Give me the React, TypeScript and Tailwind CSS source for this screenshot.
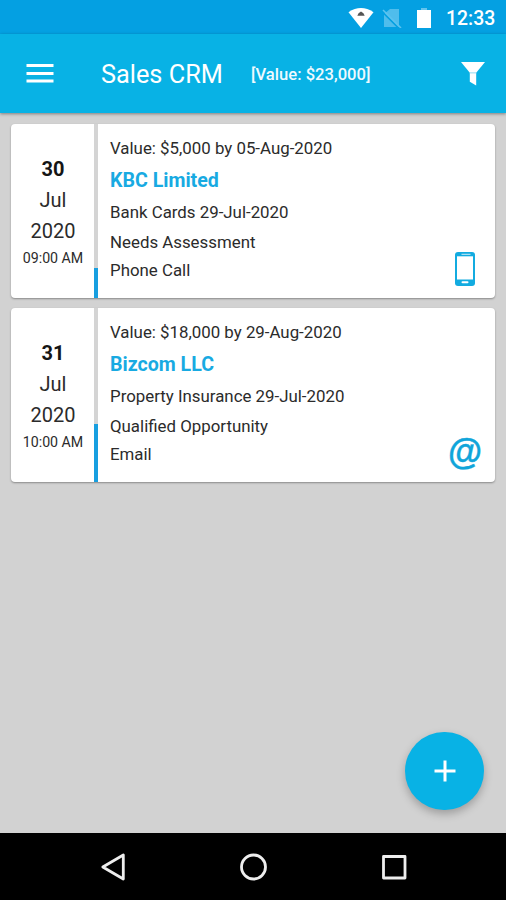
import React from "react";

type Deal = {
  day: string;
  month: string;
  year: string;
  time: string;
  value: string;
  name: string;
  product: string;
  stage: string;
  action: string;
  kind: "phone" | "email";
  bar: number;
};

const deals: Deal[] = [
  {
    day: "30", month: "Jul", year: "2020", time: "09:00 AM",
    value: "Value: $5,000 by 05-Aug-2020", name: "KBC Limited",
    product: "Bank Cards 29-Jul-2020", stage: "Needs Assessment",
    action: "Phone Call", kind: "phone", bar: 29.5,
  },
  {
    day: "31", month: "Jul", year: "2020", time: "10:00 AM",
    value: "Value: $18,000 by 29-Aug-2020", name: "Bizcom LLC",
    product: "Property Insurance 29-Jul-2020", stage: "Qualified Opportunity",
    action: "Email", kind: "email", bar: 58,
  },
];

function StatusBar() {
  return (
    <div className="flex h-[34px] shrink-0 items-center justify-end bg-[#04a0e2] pr-[10px] text-white">
      <svg className="mr-[8px] mt-px" width="26" height="22" viewBox="0 0 26 22">
        <path d="M.5 5.2Q13-3 25.5 5.2L13 21z" fill="#fff" />
        <path d="M9.3 8.8Q10 6.2 13 4.6Q16 6.2 16.7 8.8z" fill="#555" />
      </svg>
      <svg className="mr-[14px] mt-px" width="20" height="20" viewBox="0 0 20 20">
        <path d="M8 1h9v18H2V6z" fill="#4fbdec" />
        <path d="M0 3.5L16.5 20" stroke="#04a0e2" strokeWidth="1.6" />
        <path d="M1 2L19 20" stroke="#5bc3ef" strokeWidth="1.6" />
      </svg>
      <svg className="mr-[14px] mt-[2px]" width="16" height="22" viewBox="0 0 16 22">
        <path d="M1 3h14v18H1z" fill="#fff" />
        <path d="M5 1h6v2H5z" fill="#65c4ed" />
      </svg>
      <span className="mt-[3px] w-[50px] whitespace-nowrap text-[19.4px] font-medium leading-6">12:33</span>
    </div>
  );
}

function AppBar() {
  return (
    <header className="z-10 flex h-[79px] shrink-0 items-center bg-[#08b2e5] pl-[26px] pr-[21px] text-white shadow-[0_1px_3px_rgba(0,0,0,0.4)]">
      <svg width="28" height="22" viewBox="0 0 28 22">
        <path d="M.5 2.5h27M.5 10.5h27M.5 18h27" stroke="#fff" strokeWidth="3.2" />
      </svg>
      <h1 className="ml-[47px] mt-[3px] w-[150px] whitespace-nowrap text-[25.3px] leading-8">Sales CRM</h1>
      <span className="mt-[2px] whitespace-nowrap text-[16.6px] font-medium leading-6 text-[#effaff]">[Value: $23,000]</span>
      <svg className="ml-auto" width="24" height="24" viewBox="0 0 24 24">
        <path d="M0 0H24L15.2 10.8H8.8z" fill="#fff" />
        <path d="M8.8 10.8h6.4V23.5L8.8 19.8z" fill="#fff" />
        <path d="M8.8 11h6.4" stroke="#9bdcf3" strokeWidth=".8" />
      </svg>
    </header>
  );
}

function PhoneIcon() {
  return (
    <svg width="20" height="34" viewBox="0 0 20 34">
      <rect width="20" height="34" rx="3" fill="#13abe0" />
      <path d="M2 4.3h16v23.2H2z" fill="#fff" />
      <path d="M6.5 2.3h9" stroke="#a8dff3" strokeWidth="1.2" />
      <rect x="6.5" y="29.2" width="7" height="2" rx="1" fill="#fff" />
    </svg>
  );
}

function DealCard({ deal }: { deal: Deal }) {
  return (
    <article className="flex h-[173.5px] overflow-hidden rounded-[4px] bg-white text-[#2b2b2b] shadow-[0_1px_2px_rgba(0,0,0,0.35)]">
      <div className="flex w-[83px] flex-col items-center pl-px pt-[30px] text-[20px] leading-[31px]">
        <b className="text-[20px] font-bold text-[#151515]">{deal.day}</b>
        <span>{deal.month}</span>
        <span>{deal.year}</span>
        <span className="-mt-px whitespace-nowrap text-[14.2px] leading-6">{deal.time}</span>
      </div>
      <div className="flex w-[4px] flex-col justify-end bg-[#d4d4d4]">
        <div className="bg-[#189fe0]" style={{ height: deal.bar }} />
      </div>
      <div className="flex flex-1 flex-col whitespace-nowrap pl-3 pt-2 text-[16.85px]">
        <p className="leading-8">{deal.value}</p>
        <h2 className="h-8 text-[19.6px] font-bold leading-[34px] text-[#18aae2]">{deal.name}</h2>
        <p className="leading-8">{deal.product}</p>
        <p className="leading-7">{deal.stage}</p>
        <p className="leading-7">{deal.action}</p>
      </div>
      <div className="flex w-[60px] items-end justify-center pb-[12px]">
        {deal.kind === "phone" ? (
          <PhoneIcon />
        ) : (
          <span className="origin-bottom scale-y-[1.04] text-[35px] font-bold leading-[37px] text-[#10a5da] [-webkit-text-stroke:0.4px_#10a5da] [font-family:'Liberation_Sans',Arial,sans-serif]">@</span>
        )}
      </div>
    </article>
  );
}

function NavBar() {
  return (
    <nav className="flex h-[67px] shrink-0 items-center justify-between bg-black pl-[100px] pr-[98px]">
      <svg width="28" height="28" viewBox="0 0 28 28" fill="none" stroke="#eee" strokeWidth="2.8" strokeLinejoin="round">
        <path d="M23.3 2V26L2.8 14z" />
      </svg>
      <svg width="28" height="28" viewBox="0 0 28 28" fill="none" stroke="#eee" strokeWidth="2.8">
        <circle cx="13.5" cy="14" r="12" />
      </svg>
      <svg width="28" height="28" viewBox="0 0 28 28" fill="none" stroke="#eee" strokeWidth="2.8" strokeLinejoin="round">
        <rect x="3.5" y="3.5" width="21.5" height="21.5" />
      </svg>
    </nav>
  );
}

export default function App() {
  return (
    <div className="flex h-[900px] w-[506px] flex-col overflow-hidden bg-[#d2d2d2] [font-family:Roboto,sans-serif]">
      <StatusBar />
      <AppBar />
      <main className="relative flex flex-1 flex-col gap-[10.5px] px-[11px] pt-[11px]">
        {deals.map((deal) => (
          <DealCard key={deal.name} deal={deal} />
        ))}
        <button aria-label="Add" className="absolute bottom-[23px] right-[22px] flex h-[78px] w-[79px] items-center justify-center rounded-full bg-[#08b2e5] shadow-[0_4px_8px_rgba(0,0,0,0.25)]">
          <svg width="22" height="22" viewBox="0 0 22 22">
            <path d="M11 .5v21M.5 11h21" stroke="#fff" strokeWidth="3" />
          </svg>
        </button>
      </main>
      <NavBar />
    </div>
  );
}
